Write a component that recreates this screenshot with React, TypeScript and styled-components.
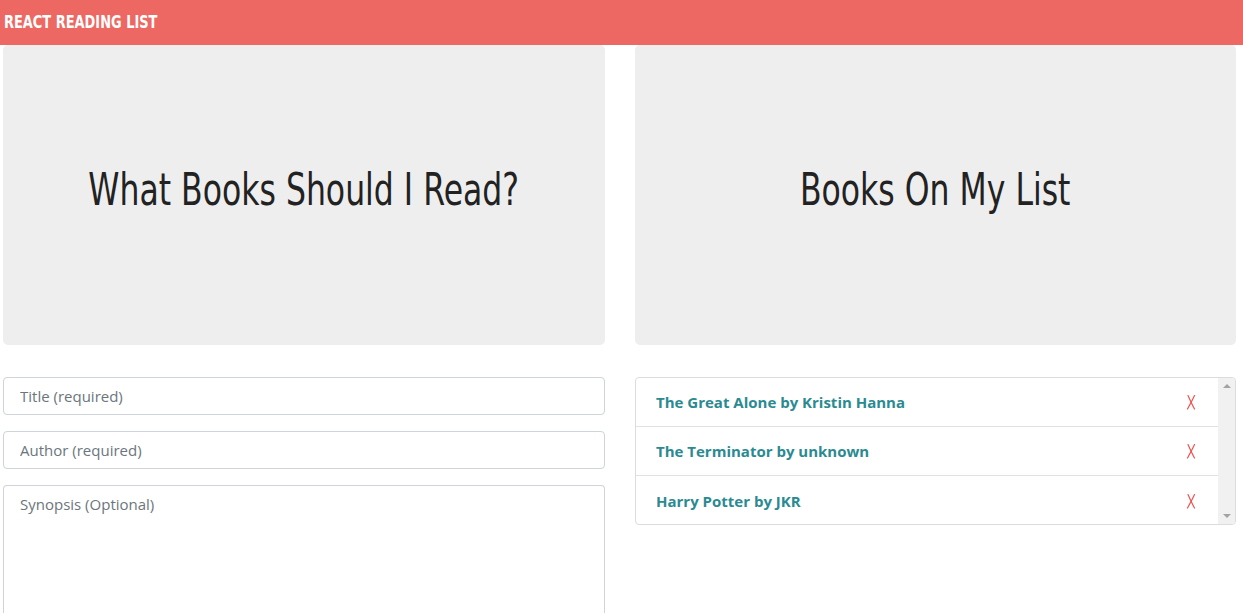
import React from "react";
import styled, { createGlobalStyle } from "styled-components";

const Global = createGlobalStyle`
  html, body { margin: 0; padding: 0; background: #fff; }
  body { font-family: "Open Sans", "Noto Sans", sans-serif; overflow: hidden; }
  * { box-sizing: border-box; }
`;

const Header = styled.header`
  height: 45px;
  background: #ed6863;
  display: flex;
  align-items: center;
  padding: 0 4px 3px;
`;

const Brand = styled.h1`
  margin: 0;
  color: #fff;
  font-family: "DejaVu Sans", sans-serif;
  font-weight: 700;
  font-size: 18px;
  transform: scaleX(0.72);
  transform-origin: left center;
  white-space: nowrap;
`;

const Grid = styled.main`
  display: grid;
  grid-template-columns: 602px 601px;
  column-gap: 30px;
  padding: 0 0 0 3px;
`;

const Column = styled.section`
  display: flex;
  flex-direction: column;
`;

const Jumbo = styled.div`
  height: 300px;
  background: #eeeeee;
  border-radius: 5px;
  display: flex;
  align-items: center;
  justify-content: center;
  margin-bottom: 32px;
`;

const Heading = styled.h2`
  margin: 0 0 12px;
  font-family: "DejaVu Sans", sans-serif;
  font-weight: 400;
  font-size: 45px;
  color: #222;
  white-space: nowrap;
  transform: scaleX(0.7);
`;

const Field = styled.input`
  height: 38px;
  width: 100%;
  border: 1px solid #ced4da;
  border-radius: 4px;
  padding: 0 16px;
  font-family: inherit;
  font-size: 15px;
  margin-bottom: 16px;
  color: #495057;
  &::placeholder { color: #6c757d; }
`;

const Area = styled.textarea`
  height: 128px;
  width: 100%;
  border: 1px solid #ced4da;
  border-bottom: none;
  border-radius: 4px 4px 0 0;
  padding: 8px 16px;
  font-family: inherit;
  font-size: 15px;
  resize: none;
  &::placeholder { color: #6c757d; }
`;

const ListBox = styled.div`
  height: 148px;
  border: 1px solid #dcdcdc;
  border-radius: 4px;
  display: flex;
  overflow: hidden;
`;

const Items = styled.ul`
  flex: 1;
  margin: 0;
  padding: 0;
  list-style: none;
`;

const Item = styled.li`
  height: 49px;
  display: flex;
  align-items: center;
  justify-content: space-between;
  padding: 0 22px 0 20px;
  border-bottom: 1px solid #dee2e6;
  &:last-child { border-bottom: none; }
`;

const BookTitle = styled.span`
  color: #2b8a91;
  font-weight: 700;
  font-size: 15px;
`;

const Remove = styled.button`
  border: none;
  background: none;
  padding: 0;
  display: flex;
  cursor: pointer;
`;

const Scrollbar = styled.div`
  width: 17px;
  background: #f1f1f1;
  display: flex;
  flex-direction: column;
  justify-content: space-between;
  align-items: center;
  padding: 6px 0;
`;

const Arrow = styled.span<{ $down?: boolean }>`
  width: 0;
  height: 0;
  border-left: 4px solid transparent;
  border-right: 4px solid transparent;
  ${(p) =>
    p.$down
      ? "border-top: 4px solid #a3a3a3;"
      : "border-bottom: 4px solid #a3a3a3;"}
`;

const BallotX = () => (
  <svg width="10" height="16" viewBox="0 0 10 16" fill="none">
    <path d="M2 1.5 C4 6 6 10.5 8.5 15" stroke="#f0534f" strokeWidth="1.2" strokeLinecap="round" />
    <path d="M8.5 1.5 C6.5 6 4 10.5 1.5 15" stroke="#f0534f" strokeWidth="1.2" strokeLinecap="round" />
  </svg>
);

const books = [
  "The Great Alone by Kristin Hanna",
  "The Terminator by unknown",
  "Harry Potter by JKR",
];

export default function App() {
  return (
    <>
      <Global />
      <Header>
        <Brand>REACT READING LIST</Brand>
      </Header>
      <Grid>
        <Column>
          <Jumbo>
            <Heading>What Books Should I Read?</Heading>
          </Jumbo>
          <Field placeholder="Title (required)" />
          <Field placeholder="Author (required)" />
          <Area placeholder="Synopsis (Optional)" />
        </Column>
        <Column>
          <Jumbo>
            <Heading>Books On My List</Heading>
          </Jumbo>
          <ListBox>
            <Items>
              {books.map((b) => (
                <Item key={b}>
                  <BookTitle>{b}</BookTitle>
                  <Remove aria-label="remove">
                    <BallotX />
                  </Remove>
                </Item>
              ))}
            </Items>
            <Scrollbar>
              <Arrow />
              <Arrow $down />
            </Scrollbar>
          </ListBox>
        </Column>
      </Grid>
    </>
  );
}
